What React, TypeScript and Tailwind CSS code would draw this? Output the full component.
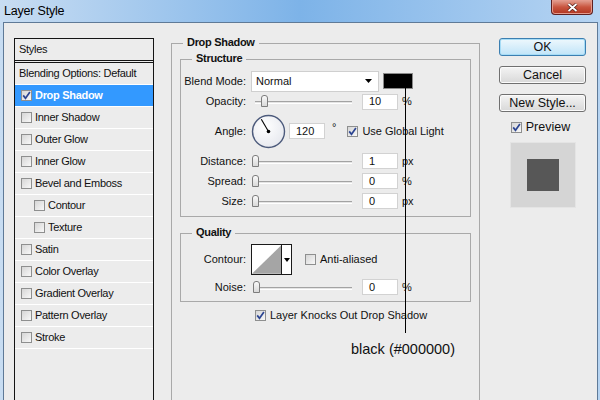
import type { ReactNode } from "react";

type StyleItem = {
  label: string;
  box?: boolean;
  checked?: boolean;
  active?: boolean;
  indent?: boolean;
};

const styleItems: StyleItem[] = [
  { label: "Blending Options: Default", box: false },
  { label: "Drop Shadow", checked: true, active: true },
  { label: "Inner Shadow" },
  { label: "Outer Glow" },
  { label: "Inner Glow" },
  { label: "Bevel and Emboss" },
  { label: "Contour", indent: true },
  { label: "Texture", indent: true },
  { label: "Satin" },
  { label: "Color Overlay" },
  { label: "Gradient Overlay" },
  { label: "Pattern Overlay" },
  { label: "Stroke" }
];

function Check({ checked = false }: { checked?: boolean }) {
  return (
    <span className="inline-flex h-[11px] w-[11px] shrink-0 items-center justify-center border border-[#8e8f8f] bg-linear-to-br from-[#d6d6d6] to-[#f8f8f8]">
      {checked ? (
        <svg width="9" height="9" viewBox="0 0 9 9" aria-hidden="true">
          <path d="M1.2 4.4 L3.5 7.3 L7.9 1.1" fill="none" stroke="#2c4592" strokeWidth="1.7" />
        </svg>
      ) : null}
    </span>
  );
}

function Group({ title, className, children }: { title: string; className: string; children: ReactNode }) {
  return (
    <div className={`relative border border-[#a9a9a9] ${className}`}>
      <span className="absolute -top-[8px] left-[11px] bg-[#ececec] px-[4px] text-[11px] leading-[13px] font-bold tracking-[-0.3px] text-[#111]">
        {title}
      </span>
      {children}
    </div>
  );
}

function Field({ label, className, children }: { label: string; className: string; children: ReactNode }) {
  return (
    <div className={`flex items-center ${className}`}>
      <span className="w-[65px] text-right">{label}</span>
      <div className="ml-[5px] flex items-center">{children}</div>
    </div>
  );
}

function NumBox({ value, className = "" }: { value: string; className?: string }) {
  return (
    <span className={`flex h-[16px] w-[36px] items-center border border-[#d2d2d2] bg-white pl-[6px] text-[11px] ${className}`}>
      {value}
    </span>
  );
}

function Slider({ thumb }: { thumb: number }) {
  return (
    <div className="relative h-[13px] w-[104px]">
      <div className="absolute top-[6px] left-[4px] h-[3px] w-[97px] border-t border-b border-t-[#a3a3a3] border-b-white bg-[#e4e4e4]" />
      <div
        className="absolute top-0 h-[12px] w-[7px] rounded-t-[3px] border border-[#7d7d7d] bg-linear-to-b from-[#fafafa] to-[#d9d9d9]"
        style={{ left: thumb }}
      />
    </div>
  );
}

function SliderField({ label, value, unit, thumb }: { label: string; value: string; unit: string; thumb: number }) {
  return (
    <Field label={label} className="h-[20px]">
      <Slider thumb={thumb} />
      <NumBox value={value} className="ml-[7px]" />
      <span className="ml-[4px]">{unit}</span>
    </Field>
  );
}

function Dial() {
  return (
    <svg width="35" height="35" viewBox="0 0 35 35" aria-hidden="true">
      <defs>
        <radialGradient id="dialFill" cx="0.4" cy="0.35" r="0.7">
          <stop offset="0" stopColor="#ffffff" />
          <stop offset="1" stopColor="#e6e8ee" />
        </radialGradient>
      </defs>
      <circle cx="17.5" cy="17.5" r="16" fill="url(#dialFill)" stroke="#4d5b7c" strokeWidth="1.4" />
      <line x1="17.5" y1="17.5" x2="10.3" y2="5.2" stroke="#000" strokeWidth="1.1" />
      <circle cx="17.5" cy="17.5" r="1.8" fill="#000" />
    </svg>
  );
}

function ContourPicker() {
  return (
    <div className="flex h-[31px] w-[41px] border border-[#1a1a1a] bg-white">
      <svg width="30" height="29" viewBox="0 0 30 29" aria-hidden="true">
        <polygon points="0,29 30,0 30,29" fill="#a5a5a5" />
      </svg>
      <div className="flex w-[10px] items-center justify-center border-l border-[#1a1a1a]">
        <svg width="6" height="4" viewBox="0 0 6 4" aria-hidden="true">
          <polygon points="0,0 6,0 3,4" fill="#000" />
        </svg>
      </div>
    </div>
  );
}

function WinButton({ label, primary = false }: { label: string; primary?: boolean }) {
  return (
    <button
      type="button"
      className={
        primary
          ? "flex h-[18px] w-[87px] items-center justify-center rounded-[3px] border border-[#3c7fb1] bg-linear-to-b from-[#eef8fd] to-[#c0e4f8] text-[12.5px] leading-none shadow-[inset_0_0_0_1px_#a6dcf6]"
          : "flex h-[18px] w-[87px] items-center justify-center rounded-[3px] border border-[#707070] bg-linear-to-b from-[#f4f4f4] to-[#d8d8d8] text-[12.5px] leading-none shadow-[inset_0_0_0_1px_#fbfbfb]"
      }
    >
      {label}
    </button>
  );
}

export default function App() {
  return (
    <div className="relative h-[400px] w-[600px] overflow-hidden bg-linear-to-r from-[#c8ddf2] via-[#7db3e8] to-[#b6d4f2] [font-family:'Liberation_Sans',Arial,sans-serif] text-[11px] text-[#111]">
      <div className="flex h-[22px] items-start justify-between">
        <span className="mt-[2px] ml-[4px] text-[12.5px] tracking-[-0.2px] text-black">Layer Style</span>
        <span className="mr-[7px] flex h-[15px] w-[42px] items-center justify-center rounded-b-[4px] border border-t-0 border-[#5e2020] bg-linear-to-b from-[#e2a295] via-[#c9553f] to-[#b0341f] shadow-[inset_0_0_0_1px_#e49a8c]">
          <svg width="11" height="9" viewBox="0 0 11 9" aria-hidden="true">
            <path d="M1.5 1 L9.5 8 M9.5 1 L1.5 8" stroke="#4a1a14" strokeWidth="3.2" />
            <path d="M1.5 1 L9.5 8 M9.5 1 L1.5 8" stroke="#ffffff" strokeWidth="1.8" />
          </svg>
        </span>
      </div>

      <div className="mr-[2px] ml-[3px] flex h-[378px] items-start border-t border-r border-l border-[#5f7a97] bg-[#ececec] pt-[15px] pl-[10px]">
        <div className="h-[380px] w-[140px] shrink-0 border border-[#141414] tracking-[-0.3px]">
          <div className="flex h-[24px] items-center border-b-[3px] border-double border-[#141414] pl-[4px]">Styles</div>
          {styleItems.map((item) => (
            <div
              key={item.label}
              className={`flex h-[22px] items-center border-b border-white ${
                item.active ? "bg-[#3399ff] font-bold text-white" : ""
              } ${item.box === false ? "pl-[4px]" : item.indent ? "pl-[19px]" : "pl-[6px]"}`}
            >
              {item.box === false ? null : <Check checked={item.checked} />}
              <span className={item.box === false ? "" : "ml-[3px]"}>{item.label}</span>
            </div>
          ))}
        </div>

        <Group title="Drop Shadow" className="mt-[5px] ml-[17px] h-[380px] w-[309px] shrink-0">
          <Group title="Structure" className="mx-[8px] mt-[15px] pt-[10px] pb-[5px]">
            <Field label="Blend Mode:" className="h-[22px]">
              <span className="flex h-[21px] w-[128px] items-center justify-between border border-[#cfcfcf] bg-white pr-[6px] pl-[4px]">
                Normal
                <svg width="7" height="4" viewBox="0 0 7 4" aria-hidden="true">
                  <polygon points="0,0 7,0 3.5,4" fill="#000" />
                </svg>
              </span>
              <span className="ml-[4px] h-[16px] w-[30px] border border-[#8a8a8a] bg-black" />
            </Field>
            <Field label="Opacity:" className="h-[19px]">
              <Slider thumb={10} />
              <NumBox value="10" className="ml-[7px]" />
              <span className="ml-[4px]">%</span>
            </Field>
            <Field label="Angle:" className="h-[40px]">
              <Dial />
              <NumBox value="120" className="ml-[3px]" />
              <span className="mb-[8px] ml-[7px]">°</span>
              <span className="ml-[11px] flex items-center">
                <Check checked />
                <span className="ml-[4px]">Use Global Light</span>
              </span>
            </Field>
            <SliderField label="Distance:" value="1" unit="px" thumb={1} />
            <SliderField label="Spread:" value="0" unit="%" thumb={1} />
            <SliderField label="Size:" value="0" unit="px" thumb={1} />
          </Group>

          <Group title="Quality" className="mx-[8px] mt-[16px] pt-[10px] pb-[4px]">
            <Field label="Contour:" className="h-[31px]">
              <ContourPicker />
              <span className="ml-[13px] flex items-center">
                <Check />
                <span className="ml-[4px]">Anti-aliased</span>
              </span>
            </Field>
            <div className="mt-[2px]">
              <SliderField label="Noise:" value="0" unit="%" thumb={2} />
            </div>
          </Group>

          <div className="mt-[3px] flex h-[20px] items-center pl-[83px]">
            <Check checked />
            <span className="ml-[4px]">Layer Knocks Out Drop Shadow</span>
          </div>
        </Group>

        <div className="ml-[19px] flex w-[87px] shrink-0 flex-col items-center">
          <WinButton label="OK" primary />
          <div className="mt-[10px]">
            <WinButton label="Cancel" />
          </div>
          <div className="mt-[10px]">
            <WinButton label="New Style..." />
          </div>
          <div className="mt-[9px] flex h-[12px] items-center pr-[4px]">
            <Check checked />
            <span className="ml-[4px] text-[12.5px]">Preview</span>
          </div>
          <div className="mt-[9px] flex h-[66px] w-[66px] items-center justify-center border border-[#e4e4e4] bg-[#d5d5d5]">
            <div className="h-[32px] w-[32px] bg-[#575757]" />
          </div>
        </div>
      </div>

      <div className="absolute top-[87px] left-[405px] h-[246px] w-[1px] bg-black" />
      <span className="absolute top-[341px] left-[351px] text-[14.5px] leading-[17px] tracking-normal text-[#111]">
        black (#000000)
      </span>
    </div>
  );
}
